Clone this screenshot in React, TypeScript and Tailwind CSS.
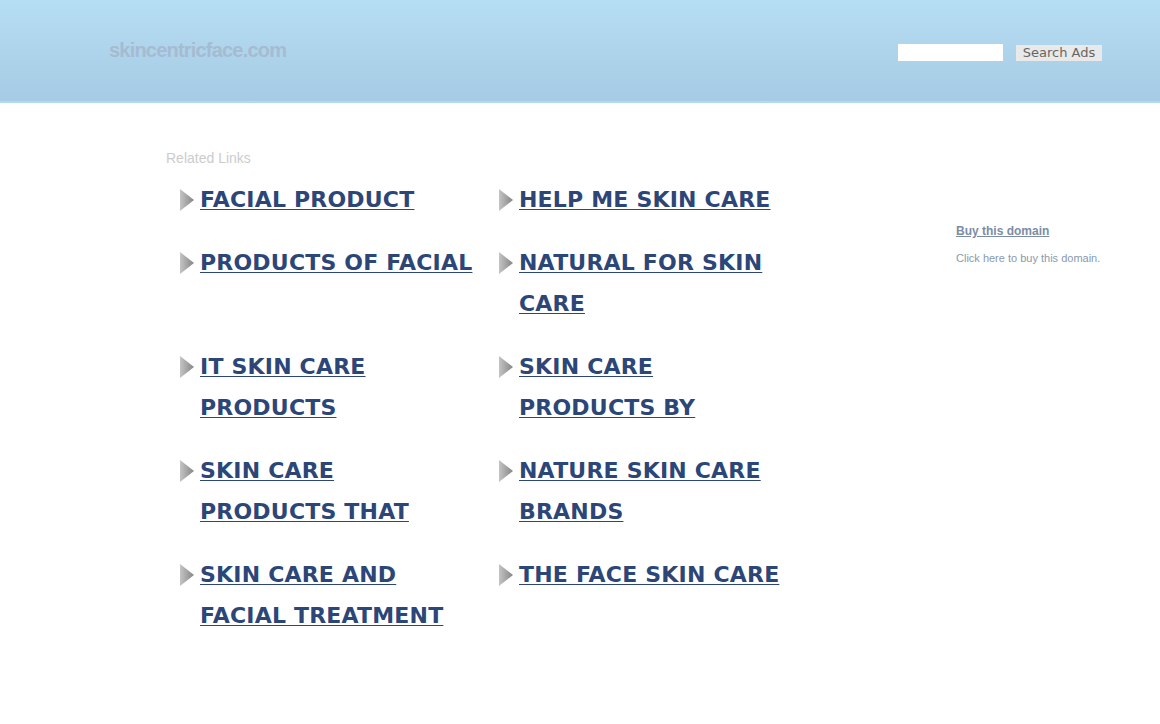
import React from "react";

const col1 = [
  "FACIAL PRODUCT",
  "PRODUCTS OF FACIAL",
  "IT SKIN CARE PRODUCTS",
  "SKIN CARE PRODUCTS THAT",
  "SKIN CARE AND FACIAL TREATMENT",
];
const col2 = [
  "HELP ME SKIN CARE",
  "NATURAL FOR SKIN CARE",
  "SKIN CARE PRODUCTS BY",
  "NATURE SKIN CARE BRANDS",
  "THE FACE SKIN CARE",
];

function Arrow() {
  return (
    <svg width="14" height="22" viewBox="0 0 14 22" className="mt-[10px] shrink-0">
      <defs>
        <linearGradient id="ag" x1="0" y1="0" x2="1" y2="0">
          <stop offset="0" stopColor="#c4c4c4" />
          <stop offset="1" stopColor="#858585" />
        </linearGradient>
      </defs>
      <polygon points="0,0 14,11 0,22" fill="url(#ag)" />
    </svg>
  );
}

function Item({ text }: { text: string }) {
  return (
    <div className="flex items-start">
      <Arrow />
      <a
        href="#"
        className="ml-[6px] w-[277px] font-bold text-[22px] leading-[41px] tracking-[0.2px] text-[#2c4677] underline underline-offset-[2px] decoration-1"
        style={{ fontFamily: '"DejaVu Sans", sans-serif' }}
      >
        {text}
      </a>
    </div>
  );
}

export default function App() {
  const rows = col1.map((t, i) => [t, col2[i]]);
  return (
    <div className="min-h-[724px] bg-white" style={{ fontFamily: '"Liberation Sans", Arial, sans-serif' }}>
      <div className="h-[103px] bg-gradient-to-b from-[#b6def3] to-[#a6cbe4] border-b-[2px] border-[#b4d8ec] flex items-start">
        <div className="pl-[109px] pt-[35px] w-[880px]">
          <span className="font-bold text-[20px] tracking-[-0.8px] text-[#a6bbd2]">skincentricface.com</span>
        </div>
        <div className="ml-[18px] pt-[44px] flex items-start">
          <input className="w-[105px] h-[17px] bg-white border-0 outline-none" />
          <button
            className="ml-[13px] mt-[1px] w-[86px] h-[16px] bg-[#e9e9e9] text-[13px] leading-[16px] text-[#666666]"
            style={{ fontFamily: '"DejaVu Sans", sans-serif' }}
          >
            Search Ads
          </button>
        </div>
      </div>
      <div className="flex pl-[166px] pt-[47px]">
        <div className="w-[790px]">
          <div className="text-[14px] leading-[16px] text-[#cccccc]">Related Links</div>
          <div className="ml-[14px] mt-[13px] grid grid-cols-[319px_319px] gap-y-[22px]">
            {rows.map(([a, b], i) => (
              <React.Fragment key={i}>
                <Item text={a} />
                <Item text={b} />
              </React.Fragment>
            ))}
          </div>
        </div>
        <div className="pt-[74px]">
          <a href="#" className="block font-bold text-[12px] leading-[14px] text-[#7b8da4] underline">
            Buy this domain
          </a>
          <div className="mt-[14px] text-[11px] leading-[13px] text-[#8999ad]">Click here to buy this domain.</div>
        </div>
      </div>
    </div>
  );
}
